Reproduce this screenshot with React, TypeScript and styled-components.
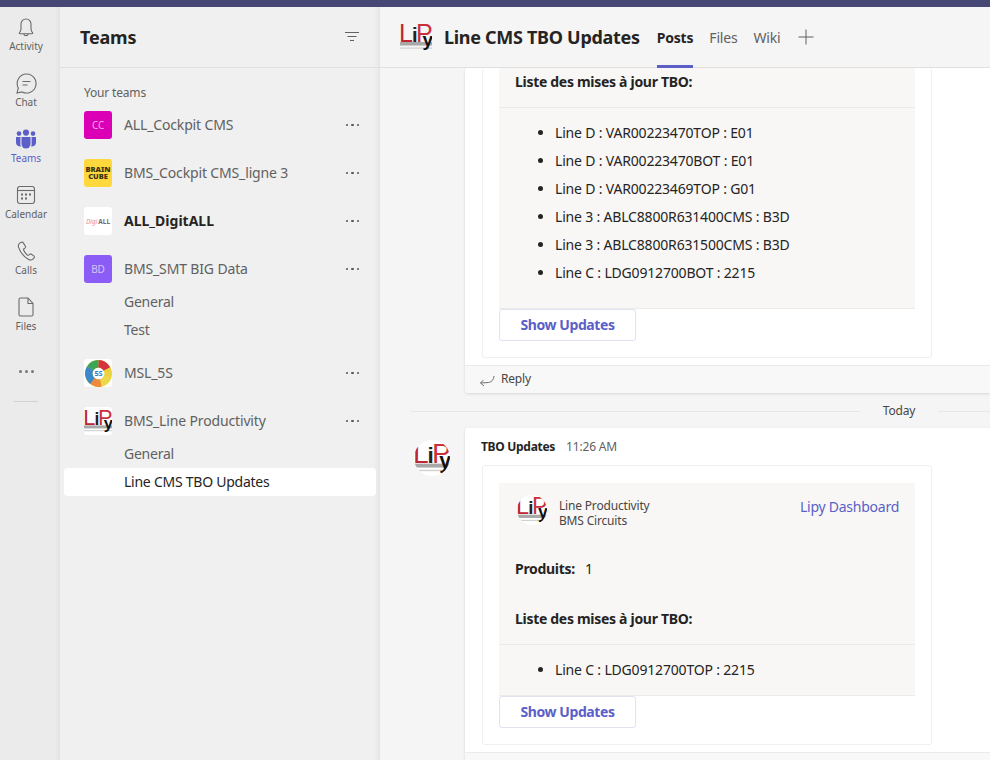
import React from "react";
import styled, { createGlobalStyle } from "styled-components";

const GlobalStyle = createGlobalStyle`
  html, body {
    margin: 0;
    height: 100%;
    overflow: hidden;
  }
  body {
    font-family: "Noto Sans", "Open Sans", sans-serif;
    font-size: 14px;
    letter-spacing: -0.18px;
    color: #252423;
  }
  #root {
    height: 100%;
  }
`;

const Page = styled.div`
  display: flex;
  flex-direction: column;
  width: 990px;
  height: 760px;
  overflow: hidden;
`;

const TopBar = styled.div`
  flex: 0 0 7px;
  background-color: #464775;
`;

const Columns = styled.div`
  flex: 1;
  display: flex;
  min-height: 0;
`;

const Rail = styled.nav`
  flex: 0 0 60px;
  box-sizing: border-box;
  padding-top: 3px;
  display: flex;
  flex-direction: column;
  align-items: flex-start;
  background-color: #ebebeb;
  box-shadow: inset -6px 0 6px -6px rgba(0, 0, 0, 0.08);
`;

const RailItem = styled.div<{ $active?: boolean }>`
  width: 52px;
  height: 56px;
  box-sizing: border-box;
  padding-top: 5px;
  display: flex;
  flex-direction: column;
  align-items: center;
  color: ${(p) => (p.$active ? "#5b5fc7" : "#616161")};
  font-size: 10px;
  line-height: 14px;
  letter-spacing: 0;

  svg {
    display: block;
  }
`;

const RailDots = styled.div`
  width: 52px;
  margin-top: 24px;
  display: flex;
  justify-content: center;
  gap: 3px;
`;

const Dot = styled.span<{ $size?: number; $color?: string }>`
  width: ${(p) => p.$size ?? 3}px;
  height: ${(p) => p.$size ?? 3}px;
  border-radius: 50%;
  background-color: ${(p) => p.$color ?? "#777"};
`;

const RailLine = styled.div`
  width: 24px;
  height: 1px;
  margin: 28px 0 0 14px;
  background-color: #d1d1d1;
`;

const Sidebar = styled.aside`
  flex: 0 0 320px;
  display: flex;
  flex-direction: column;
  background-color: #f0f0f0;
  box-shadow: inset -6px 0 6px -6px rgba(0, 0, 0, 0.1);
`;

const SidebarHeader = styled.header`
  flex: 0 0 61px;
  box-sizing: border-box;
  padding: 0 20px;
  display: flex;
  align-items: center;
  justify-content: space-between;
  border-bottom: 1px solid #e0e0e0;
`;

const SidebarTitle = styled.h2`
  margin: 0;
  font-size: 18px;
  line-height: 24px;
  font-weight: 700;
  color: #252423;
`;

const TeamList = styled.div`
  padding: 17px 4px 0;
`;

const SectionLabel = styled.div`
  height: 16px;
  margin: 0 0 6px 20px;
  font-size: 12px;
  line-height: 16px;
  color: #616161;
`;

const TeamRow = styled.div<{ $flush?: boolean }>`
  height: 36px;
  margin-bottom: ${(p) => (p.$flush ? 1 : 12)}px;
  padding: 0 17px 0 20px;
  display: flex;
  align-items: center;
`;

const Avatar = styled.div<{ $bg: string }>`
  flex: 0 0 28px;
  width: 28px;
  height: 28px;
  border-radius: 3px;
  overflow: hidden;
  display: flex;
  align-items: center;
  justify-content: center;
  background-color: ${(p) => p.$bg};
  color: rgba(255, 255, 255, 0.65);
  font-size: 10px;
`;

const BrainCube = styled.div`
  font-size: 7.5px;
  line-height: 7px;
  font-weight: 900;
  text-align: center;
  color: #3d3510;
  letter-spacing: 0;
`;

const DigitAll = styled.div`
  font-size: 6.5px;
  font-weight: 700;
  color: #7a6a70;
  white-space: nowrap;
  letter-spacing: 0;

  i {
    margin-right: 1px;
    color: #e58aa6;
    font-weight: 400;
  }
`;

const TeamName = styled.div<{ $bold?: boolean }>`
  flex: 1;
  margin-left: 12px;
  white-space: nowrap;
  font-size: 14px;
  line-height: 20px;
  font-weight: ${(p) => (p.$bold ? 700 : 400)};
  letter-spacing: ${(p) => (p.$bold ? "0" : "-0.15px")};
  color: ${(p) => (p.$bold ? "#252423" : "#616161")};
`;

const MoreDots = styled.div`
  display: flex;
  gap: 3px;
`;

const ChannelGroup = styled.div`
  margin-bottom: 11px;
`;

const Channel = styled.div<{ $active?: boolean }>`
  height: 28px;
  padding-left: 60px;
  border-radius: 4px;
  line-height: 28px;
  font-size: 14px;
  letter-spacing: -0.25px;
  background-color: ${(p) => (p.$active ? "#fff" : "transparent")};
  color: ${(p) => (p.$active ? "#252423" : "#616161")};
`;

const Main = styled.main`
  flex: 1;
  min-width: 0;
  display: flex;
  flex-direction: column;
  background-color: #f5f5f5;
`;

const MainHeader = styled.header`
  flex: 0 0 61px;
  box-sizing: border-box;
  padding-left: 20px;
  display: flex;
  align-items: center;
  border-bottom: 1px solid #e0e0e0;
`;

const ChannelTitle = styled.h1`
  margin: 0 17px 0 12px;
  font-size: 18px;
  line-height: 24px;
  font-weight: 700;
  letter-spacing: -0.3px;
  white-space: nowrap;
  color: #252423;
`;

const Tab = styled.div<{ $active?: boolean }>`
  align-self: stretch;
  margin-right: 16px;
  display: flex;
  align-items: center;
  box-sizing: border-box;
  border-bottom: 3px solid ${(p) => (p.$active ? "#5b5fc7" : "transparent")};
  margin-bottom: -1px;
  border-top: 3px solid transparent;
  font-size: 14px;
  font-weight: ${(p) => (p.$active ? 700 : 400)};
  letter-spacing: ${(p) => (p.$active ? "-0.2px" : "-0.18px")};
  color: ${(p) => (p.$active ? "#252423" : "#616161")};
`;

const AddTab = styled.div`
  margin-left: 1px;
  display: flex;
`;

const Feed = styled.div`
  flex: 1;
  min-height: 0;
  overflow: hidden;
`;

const Post = styled.article`
  margin-left: 85px;
  background-color: #fff;
  border-radius: 3px 0 0 3px;
  box-shadow: 0 1px 3px rgba(0, 0, 0, 0.12);
`;

const PostBody = styled.div`
  padding: 0 0 7px 17px;
`;

const PostMeta = styled.div`
  height: 37px;
  margin-left: -1px;
  display: flex;
  align-items: center;
  gap: 11px;
  font-size: 12px;
`;

const Author = styled.span`
  font-weight: 700;
  letter-spacing: -0.3px;
  color: #252423;
`;

const Time = styled.span`
  color: #616161;
`;

const Card = styled.div<{ $open?: boolean }>`
  width: 450px;
  box-sizing: border-box;
  padding: ${(p) => (p.$open ? "0" : "17px")} 16px 16px;
  border: 1px solid #efefef;
  border-top-width: ${(p) => (p.$open ? 0 : 1)}px;
  border-radius: 3px;
`;

const CardBody = styled.div`
  background-color: #f8f7f6;
  border-bottom: 1px solid #ebebeb;
`;

const BrandRow = styled.div`
  height: 55px;
  padding: 12px 16px 0 18px;
  box-sizing: border-box;
  display: flex;
  align-items: flex-start;
`;

const RoundLogo = styled.div<{ $size: number }>`
  flex: 0 0 ${(p) => p.$size}px;
  width: ${(p) => p.$size}px;
  height: ${(p) => p.$size}px;
  border-radius: 50%;
  background-color: #fff;
  overflow: hidden;
  display: flex;
  align-items: center;
  justify-content: center;
`;

const BrandText = styled.div`
  flex: 1;
  margin-left: 12px;
  padding-top: 3px;
  font-size: 12px;
  line-height: 15px;
  color: #484644;
`;

const DashLink = styled.a`
  margin-top: 2px;
  font-size: 14px;
  line-height: 20px;
  letter-spacing: -0.25px;
  color: #5b5fc7;
`;

const Field = styled.div`
  margin-top: 8px;
  height: 47px;
  box-sizing: border-box;
  padding: 0 0 2px 16px;
  display: flex;
  align-items: center;
  gap: 10px;
  line-height: 20px;
  font-size: 14px;
`;

const Strong = styled.span`
  font-weight: 700;
  letter-spacing: -0.3px;
  color: #252423;
`;

const ListTitle = styled.div<{ $height: number; $trim?: number }>`
  height: ${(p) => p.$height}px;
  box-sizing: border-box;
  padding: 0 0 ${(p) => p.$trim ?? 0}px 16px;
  display: flex;
  align-items: center;
  border-bottom: 1px solid #ebebeb;
  font-weight: 700;
  font-size: 14px;
  letter-spacing: -0.3px;
`;

const Updates = styled.ul<{ $bottom: number }>`
  margin: 0;
  padding: 11px 0 ${(p) => p.$bottom}px 56px;
  font-size: 14px;
  line-height: 28px;
  color: #252423;
`;

const ShowButton = styled.button`
  width: 137px;
  height: 32px;
  display: block;
  padding: 0 0 2px;
  border: 1px solid #e1e1f1;
  border-radius: 3px;
  background-color: #fff;
  color: #5b5fc7;
  font-family: inherit;
  font-size: 14px;
  font-weight: 700;
  letter-spacing: -0.4px;
`;

const ReplyBar = styled.div`
  height: 27px;
  box-sizing: content-box;
  padding-left: 14px;
  display: flex;
  align-items: center;
  gap: 6px;
  border-top: 1px solid #ebebeb;
  background-color: #f8f8f8;
  border-radius: 0 0 0 3px;
  font-size: 12px;
  color: #484644;
`;

const ReplyLabel = styled.span`
  margin-top: -2px;
`;

const DayDivider = styled.div`
  margin: 17px 0 16px 31px;
  height: 2px;
  display: flex;
  align-items: center;
`;

const DayLine = styled.div<{ $fixed?: boolean }>`
  flex: ${(p) => (p.$fixed ? "0 0 52px" : "1")};
  height: 1px;
  background-color: #e6e6e6;
`;

const DayLabel = styled.div`
  flex: 0 0 78px;
  text-align: center;
  font-size: 12px;
  line-height: 16px;
  color: #484644;
`;

const PostRow = styled.div`
  position: relative;
`;

const PostAvatar = styled.div`
  position: absolute;
  left: 34px;
  top: 12px;
`;

const BellIcon = () => (
  <svg width="24" height="24" viewBox="0 0 24 24" fill="none" stroke="#6b6b6b" strokeWidth="1.1">
    <path d="M5.5 17.5c1.2-1.1 1.5-2.5 1.5-4V9a5 5 0 0 1 10 0v4.5c0 1.5.3 2.9 1.5 4 .5.6.2 1.2-.6 1.2H6.1c-.8 0-1.1-.6-.6-1.2z" />
    <path d="M9.7 19a2.4 2.4 0 0 0 4.6 0" />
  </svg>
);

const ChatIcon = () => (
  <svg width="24" height="24" viewBox="0 0 24 24" fill="none" stroke="#6b6b6b" strokeWidth="1.1">
    <path d="M12.5 3a9.5 9.5 0 1 1-4.4 17.9L3 22l1.3-5A9.5 9.5 0 0 1 12.5 3z" />
    <path d="M8.5 10.5h8M8.5 14h5" />
  </svg>
);

const TeamsIcon = () => (
  <svg width="24" height="24" viewBox="0 0 24 24" fill="#5b5fc7">
    <circle cx="12" cy="5.6" r="3.1" />
    <circle cx="5" cy="6.6" r="2.3" />
    <circle cx="19" cy="6.6" r="2.3" />
    <path d="M7.5 10h9v7a4.5 4.5 0 0 1-9 0z" />
    <path d="M2 10h4.4v7c0 1 .2 1.9.6 2.6C4.2 19.8 2 18 2 15.500z" />
    <path d="M22 10h-4.400v7c0 1-.2 1.900-.6 2.600 2.800.2 5-1.600 5-4.100z" />
  </svg>
);

const CalendarIcon = () => (
  <svg width="24" height="24" viewBox="0 0 24 24" fill="none" stroke="#6b6b6b" strokeWidth="1.1">
    <rect x="3.500" y="3.500" width="17" height="17" rx="2.500" />
    <path d="M3.500 7.500h17" />
    <g fill="#6b6b6b" stroke="none">
      <rect x="7" y="10.500" width="2" height="2" />
      <rect x="11" y="10.500" width="2" height="2" />
      <rect x="15" y="10.500" width="2" height="2" />
      <rect x="7" y="14.500" width="2" height="2" />
      <rect x="11" y="14.500" width="2" height="2" />
    </g>
  </svg>
);

const PhoneIcon = () => (
  <svg width="24" height="24" viewBox="0 0 24 24" fill="none" stroke="#6b6b6b" strokeWidth="1.1">
    <path d="M7.500 3.200 5.800 4.100C4.300 5 4 6.500 4.600 8.300c1.700 5 5.200 9.400 9.700 11.900 1.800 1 3.600 1 4.800-.3l.9-1c.6-.7.5-1.500-.2-2l-2.400-1.700c-.6-.4-1.200-.4-1.800.1l-1 .8c-.4.3-.8.3-1.200 0-1.700-1.300-3-3.100-3.800-5.100-.2-.5 0-.9.400-1.200l.9-.7c.6-.5.8-1.100.5-1.800L9.300 3.900c-.4-.8-1.100-1-1.800-.7z" />
  </svg>
);

const FileIcon = () => (
  <svg width="24" height="24" viewBox="0 0 24 24" fill="none" stroke="#6b6b6b" strokeWidth="1.1">
    <path d="M6.500 3h7.500l5 5.500V19.500a1.500 1.500 0 0 1-1.500 1.500h-11A1.500 1.500 0 0 1 5 19.500V4.500A1.500 1.500 0 0 1 6.500 3z" />
    <path d="M14 3v5.500h5" />
  </svg>
);

const FilterIcon = () => (
  <svg width="16" height="16" viewBox="0 0 16 16" fill="none" stroke="#616161" strokeWidth="1">
    <path d="M1 3.500h14M3.500 7.500h9M6 11.500h4" />
  </svg>
);

const PlusIcon = () => (
  <svg width="16" height="16" viewBox="0 0 16 16" fill="none" stroke="#616161" strokeWidth="1">
    <path d="M8 .5v15M.5 8h15" />
  </svg>
);

const ReplyIcon = () => (
  <svg width="16" height="16" viewBox="0 0 16 16" fill="none" stroke="#616161" strokeWidth="0.9">
    <path d="M15 4c0 3.500-2.500 6-5.500 6.500L1.500 11M1.500 11l3-3M1.500 11l3.500 3" />
  </svg>
);

const LipyLogo = ({ size }: { size: number }) => (
  <svg width={size} height={size} viewBox="0 0 32 32" fontFamily="Liberation Sans, sans-serif">
    <rect x="0" y="21" width="32" height="3.500" fill="#a8a8a8" />
    <rect x="0" y="26.500" width="32" height="1.200" fill="#cfcfcf" />
    <text x="-1" y="20.500" fontSize="25" fill="#bd2632">L</text>
    <text x="12" y="20.500" fontSize="20" fontWeight="700" fill="#222">i</text>
    <text x="16" y="20.500" fontSize="25" fill="#c9303c">P</text>
    <text x="22.500" y="25" fontSize="19" fontWeight="700" fill="#111">y</text>
  </svg>
);

const WheelIcon = () => (
  <svg width="27" height="27" viewBox="0 0 36 36" fill="none" strokeWidth="10">
    <circle cx="18" cy="18" r="13" stroke="#e9d23c" />
    <path d="M7 11a13 13 0 0 1 11-6" stroke="#3aa655" />
    <path d="M18 5a13 13 0 0 1 11 7" stroke="#d4343f" />
    <path d="M30.500 22a13 13 0 0 1-9 8.500" stroke="#ecd84a" />
    <path d="M21 30.700a13 13 0 0 1-11-3" stroke="#ee8a3c" />
    <path d="M10 28a13 13 0 0 1-3-17" stroke="#3c89c9" />
    <text x="18" y="21.500" fontSize="10" fontWeight="700" fill="#2f7fc1" stroke="none" textAnchor="middle">5S</text>
  </svg>
);

const More = () => (
  <MoreDots>
    <Dot $color="#555" $size={2.500} />
    <Dot $color="#555" $size={2.500} />
    <Dot $color="#555" $size={2.500} />
  </MoreDots>
);

const Team = ({ avatar, name, bold, flush }: { avatar: React.ReactNode; name: string; bold?: boolean; flush?: boolean }) => (
  <TeamRow $flush={flush}>
    {avatar}
    <TeamName $bold={bold}>{name}</TeamName>
    <More />
  </TeamRow>
);

const firstUpdates = [
  "Line D : VAR00223470TOP : E01",
  "Line D : VAR00223470BOT : E01",
  "Line D : VAR00223469TOP : G01",
  "Line 3 : ABLC8800R631400CMS : B3D",
  "Line 3 : ABLC8800R631500CMS : B3D",
  "Line C : LDG0912700BOT : 2215",
];

const App = () => (
  <Page>
    <GlobalStyle />
    <TopBar />
    <Columns>
      <Rail>
        <RailItem><BellIcon />Activity</RailItem>
        <RailItem><ChatIcon />Chat</RailItem>
        <RailItem $active><TeamsIcon />Teams</RailItem>
        <RailItem><CalendarIcon />Calendar</RailItem>
        <RailItem><PhoneIcon />Calls</RailItem>
        <RailItem><FileIcon />Files</RailItem>
        <RailDots>
          <Dot />
          <Dot />
          <Dot />
        </RailDots>
        <RailLine />
      </Rail>

      <Sidebar>
        <SidebarHeader>
          <SidebarTitle>Teams</SidebarTitle>
          <FilterIcon />
        </SidebarHeader>
        <TeamList>
          <SectionLabel>Your teams</SectionLabel>
          <Team avatar={<Avatar $bg="#db00b6">CC</Avatar>} name="ALL_Cockpit CMS" />
          <Team
            avatar={
              <Avatar $bg="#ffd83d">
                <BrainCube>BRAIN<br />CUBE</BrainCube>
              </Avatar>
            }
            name="BMS_Cockpit CMS_ligne 3"
          />
          <Team
            avatar={
              <Avatar $bg="#fff">
                <DigitAll><i>Digi</i>ALL</DigitAll>
              </Avatar>
            }
            name="ALL_DigitALL"
            bold
          />
          <Team avatar={<Avatar $bg="#8b5cf6">BD</Avatar>} name="BMS_SMT BIG Data" flush />
          <ChannelGroup>
            <Channel>General</Channel>
            <Channel>Test</Channel>
          </ChannelGroup>
          <Team avatar={<Avatar $bg="#fff"><WheelIcon /></Avatar>} name="MSL_5S" />
          <Team avatar={<Avatar $bg="#fff"><LipyLogo size={28} /></Avatar>} name="BMS_Line Productivity" flush />
          <Channel>General</Channel>
          <Channel $active>Line CMS TBO Updates</Channel>
        </TeamList>
      </Sidebar>

      <Main>
        <MainHeader>
          <LipyLogo size={32} />
          <ChannelTitle>Line CMS TBO Updates</ChannelTitle>
          <Tab $active>Posts</Tab>
          <Tab>Files</Tab>
          <Tab>Wiki</Tab>
          <AddTab>
            <PlusIcon />
          </AddTab>
        </MainHeader>
        <Feed>
          <Post>
            <PostBody>
              <Card $open>
                <CardBody>
                  <ListTitle $height={40} $trim={12}>Liste des mises à jour TBO:</ListTitle>
                  <Updates $bottom={21}>
                    {firstUpdates.map((line) => (
                      <li key={line}>{line}</li>
                    ))}
                  </Updates>
                </CardBody>
                <ShowButton>Show Updates</ShowButton>
              </Card>
            </PostBody>
            <ReplyBar>
              <ReplyIcon />
              <ReplyLabel>Reply</ReplyLabel>
            </ReplyBar>
          </Post>

          <DayDivider>
            <DayLine />
            <DayLabel>Today</DayLabel>
            <DayLine $fixed />
          </DayDivider>

          <PostRow>
            <PostAvatar>
              <RoundLogo $size={36}>
                <LipyLogo size={36} />
              </RoundLogo>
            </PostAvatar>
            <Post>
              <PostBody>
                <PostMeta>
                  <Author>TBO Updates</Author>
                  <Time>11:26 AM</Time>
                </PostMeta>
                <Card>
                  <CardBody>
                    <BrandRow>
                      <RoundLogo $size={30}>
                        <LipyLogo size={30} />
                      </RoundLogo>
                      <BrandText>
                        Line Productivity
                        <br />
                        BMS Circuits
                      </BrandText>
                      <DashLink>Lipy Dashboard</DashLink>
                    </BrandRow>
                    <Field>
                      <Strong>Produits:</Strong>
                      <span>1</span>
                    </Field>
                    <ListTitle $height={52}>Liste des mises à jour TBO:</ListTitle>
                    <Updates $bottom={11}>
                      <li>Line C : LDG0912700TOP : 2215</li>
                    </Updates>
                  </CardBody>
                  <ShowButton>Show Updates</ShowButton>
                </Card>
              </PostBody>
              <ReplyBar />
            </Post>
          </PostRow>
        </Feed>
      </Main>
    </Columns>
  </Page>
);

export default App;
